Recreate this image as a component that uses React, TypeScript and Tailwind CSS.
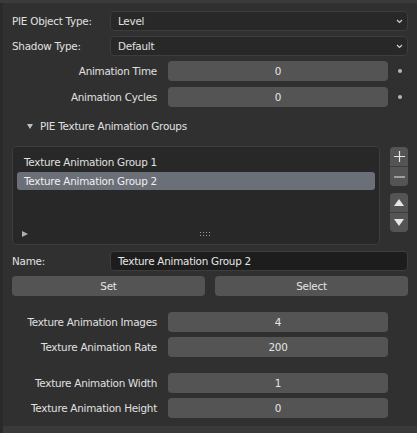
import { ReactNode } from "react";

const font = { fontFamily: '"DejaVu Sans", "Liberation Sans", sans-serif' };

function Chevron() {
  return (
    <svg width="7" height="5" viewBox="0 0 7 5" className="shrink-0">
      <path d="M1 1 L3.5 3.5 L6 1" fill="none" stroke="#d0d0d0" strokeWidth="1.2" />
    </svg>
  );
}

function Dropdown({ label, value }: { label: string; value: string }) {
  return (
    <div className="flex items-center h-[20px]">
      <div className="w-[98px] text-[#e0e0e0]">{label}</div>
      <div className="flex-1 h-full flex items-center justify-between bg-[#282828] border border-[#3d3d3d] rounded-[4px] pl-[7px] pr-[4px]">
        <span className="text-[#e0e0e0]">{value}</span>
        <Chevron />
      </div>
    </div>
  );
}

function NumRow({ label, value, dot }: { label: string; value: string; dot?: boolean }) {
  return (
    <div className="flex items-center h-[20px]">
      <div className="w-[145px] text-right text-[#e0e0e0]">{label}</div>
      <div className="ml-[11px] w-[220px] h-full flex items-center justify-center bg-[#545454] rounded-[4px] text-[#e6e6e6]">
        {value}
      </div>
      {dot && <div className="ml-[10px] w-[4px] h-[4px] rounded-full bg-[#b8b8b8]" />}
    </div>
  );
}

function SideBtn({ children }: { children: ReactNode }) {
  return <div className="h-[19px] flex items-center justify-center">{children}</div>;
}

export default function App() {
  return (
    <div style={font} className="w-[417px] h-[433px] bg-[#303030] flex flex-col text-[10.4px] tracking-[-0.25px] leading-none overflow-hidden">
      <div className="h-[3px] bg-[#3b3b3b] shrink-0" />
      <div className="flex flex-1">
        <div className="w-[3px] bg-[#2a2a2a] shrink-0" />
        <div className="flex-1 flex flex-col">
          <div className="flex-1 pl-[9px] pr-[9px] pt-[8px]">
            <div className="flex flex-col gap-[5px]">
              <Dropdown label="PIE Object Type:" value="Level" />
              <Dropdown label="Shadow Type:" value="Default" />
            </div>
            <div className="flex flex-col gap-[6px] mt-[5px]">
              <NumRow label="Animation Time" value="0" dot />
              <NumRow label="Animation Cycles" value="0" dot />
            </div>

            <div className="flex items-center h-[20px] mt-[9px] pl-[15px] text-[#e0e0e0]">
              <svg width="6" height="5" viewBox="0 0 6 5" className="mr-[7px]">
                <path d="M0 0 H6 L3 5 Z" fill="#bdbdbd" />
              </svg>
              PIE Texture Animation Groups
            </div>

            <div className="flex mt-[10px]">
              <div className="w-[368px] h-[99px] bg-[#282828] border border-[#3d3d3d] rounded-[4px] flex flex-col px-[4px] pt-[6px]">
                <div className="h-[19px] flex items-center pl-[7px] text-[#e0e0e0]">Texture Animation Group 1</div>
                <div className="h-[18px] flex items-center pl-[7px] bg-[#6b6f78] rounded-[3px] text-[#f0f0f0]">
                  Texture Animation Group 2
                </div>
                <div className="flex-1" />
                <div className="h-[14px] mb-[3px] flex items-center relative">
                  <svg width="6" height="6" viewBox="0 0 6 6" className="ml-[5px]">
                    <path d="M0 0 L6 3 L0 6 Z" fill="#b0b0b0" />
                  </svg>
                  <svg width="11" height="5" viewBox="0 0 11 5" className="absolute left-[183px]">
                    {[0, 3, 6, 9].map((x) => (
                      <g key={x}>
                        <rect x={x} y={0} width="1" height="1" fill="#9a9a9a" />
                        <rect x={x} y={3} width="1" height="1" fill="#9a9a9a" />
                      </g>
                    ))}
                  </svg>
                </div>
              </div>
              <div className="ml-[10px] w-[18px] flex flex-col pt-[1px]">
                <div className="flex flex-col bg-[#545454] rounded-[4px] overflow-hidden">
                  <SideBtn>
                    <svg width="11" height="11" viewBox="0 0 11 11">
                      <path d="M5.5 0 V11 M0 5.5 H11" stroke="#e6e6e6" strokeWidth="1.2" />
                    </svg>
                  </SideBtn>
                  <div className="h-px bg-[#3d3d3d]" />
                  <SideBtn>
                    <svg width="11" height="2" viewBox="0 0 11 2">
                      <path d="M0 1 H11" stroke="#e6e6e6" strokeWidth="1.2" />
                    </svg>
                  </SideBtn>
                </div>
                <div className="flex flex-col bg-[#545454] rounded-[4px] overflow-hidden mt-[7px]">
                  <SideBtn>
                    <svg width="10" height="7" viewBox="0 0 10 7">
                      <path d="M5 0 L10 7 H0 Z" fill="#e6e6e6" />
                    </svg>
                  </SideBtn>
                  <div className="h-px bg-[#3d3d3d]" />
                  <SideBtn>
                    <svg width="10" height="7" viewBox="0 0 10 7">
                      <path d="M0 0 H10 L5 7 Z" fill="#e6e6e6" />
                    </svg>
                  </SideBtn>
                </div>
              </div>
            </div>

            <div className="flex items-center h-[20px] mt-[6px]">
              <div className="w-[98px] text-[#e0e0e0]">Name:</div>
              <div className="flex-1 h-full flex items-center bg-[#1d1d1d] border border-[#3d3d3d] rounded-[4px] pl-[7px] text-[#e6e6e6]">
                Texture Animation Group 2
              </div>
            </div>
            <div className="flex gap-[10px] h-[20px] mt-[5px]">
              <div className="flex-1 flex items-center justify-center bg-[#545454] rounded-[4px] text-[#e6e6e6]">Set</div>
              <div className="flex-1 flex items-center justify-center bg-[#545454] rounded-[4px] text-[#e6e6e6]">Select</div>
            </div>

            <div className="flex flex-col gap-[5px] mt-[16px]">
              <NumRow label="Texture Animation Images" value="4" />
              <NumRow label="Texture Animation Rate" value="200" />
            </div>
            <div className="flex flex-col gap-[5px] mt-[16px]">
              <NumRow label="Texture Animation Width" value="1" />
              <NumRow label="Texture Animation Height" value="0" />
            </div>
          </div>
          <div className="h-[7px] bg-[#3a3a3a] shrink-0" />
        </div>
      </div>
    </div>
  );
}
